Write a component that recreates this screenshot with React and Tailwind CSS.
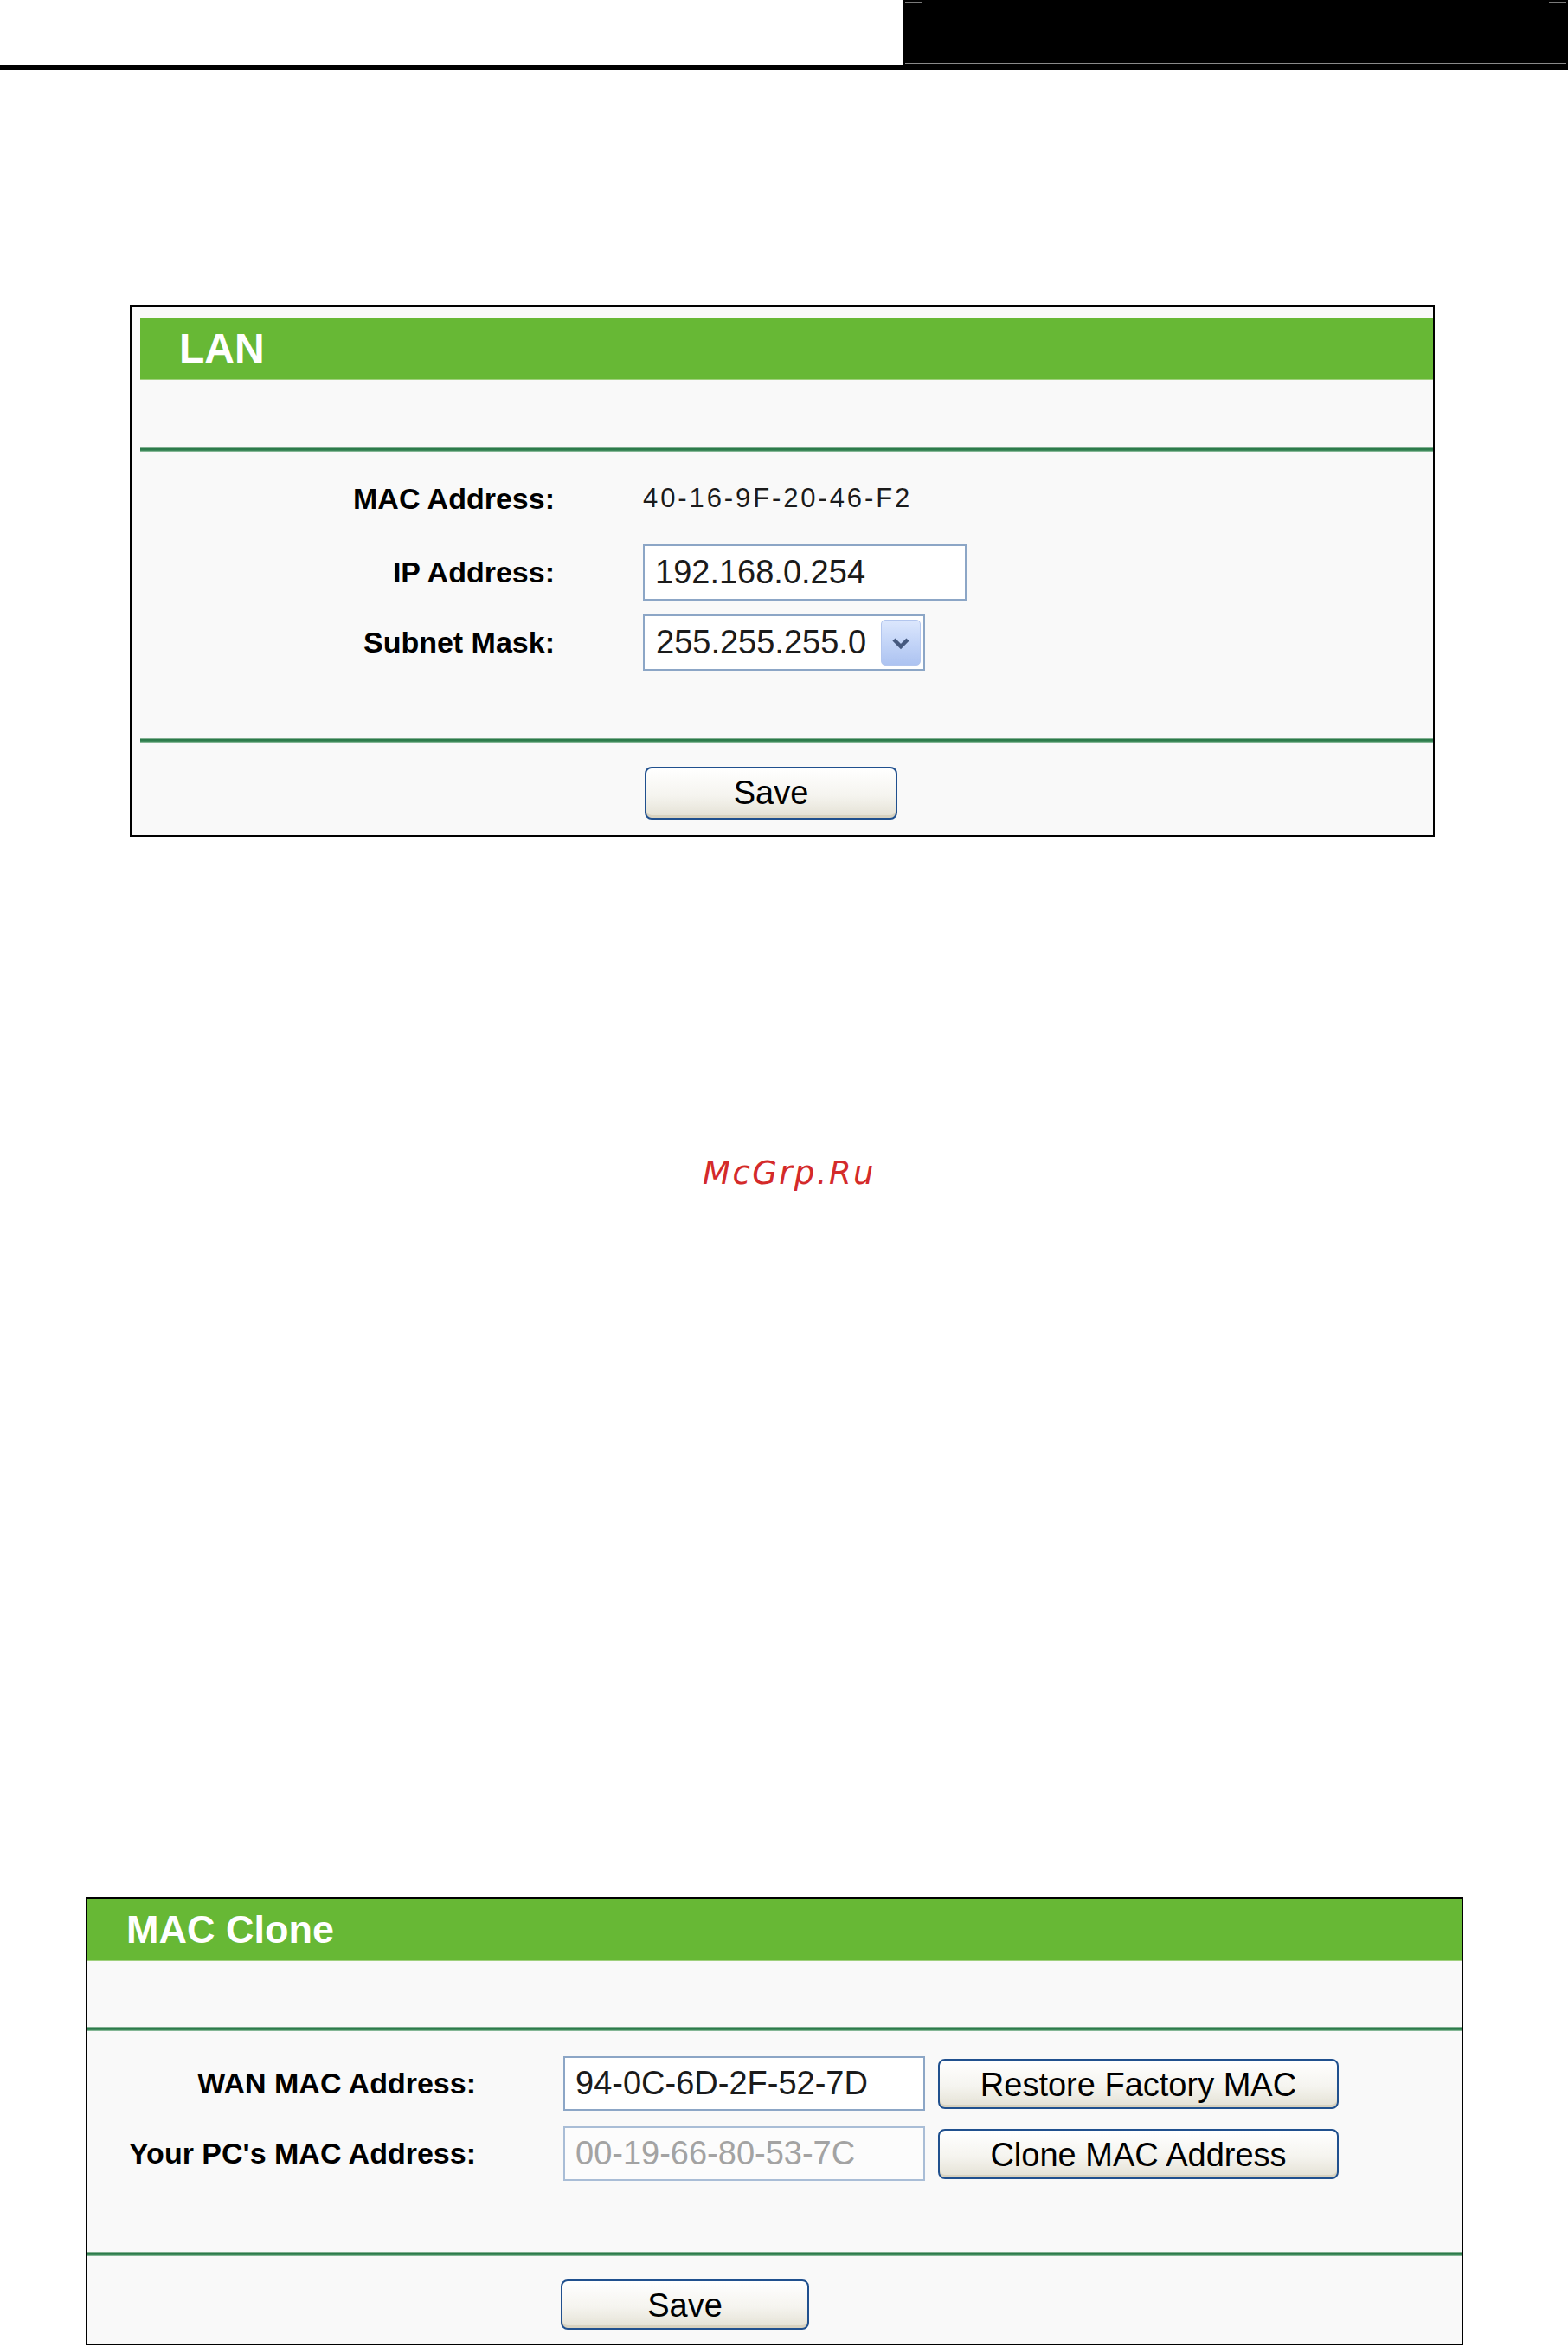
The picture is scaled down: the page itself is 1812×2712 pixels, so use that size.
import React from "react";

// Router admin forms: LAN settings and MAC clone, on a white page
function TopBar() {
  return (
    <div>
      <div className="flex h-[75px]">
        <div className="flex-1" />
        <div className="relative w-[768px] bg-black">
          <div className="absolute left-[2px] top-[2px] h-px w-[20px] bg-[#7a7a7a]" />
          <div className="absolute right-[2px] top-[2px] h-px w-[20px] bg-[#7a7a7a]" />
          <div className="absolute bottom-[1px] left-[2px] right-[2px] h-px bg-[#8a8a8a]" />
        </div>
      </div>
      <div className="h-[6px] bg-black" />
    </div>
  );
}

function Divider() {
  return (
    <div className="h-[5px] bg-[linear-gradient(to_bottom,#b9d3c0_0%,#2c7a4a_25%,#2f7f4e_65%,#a6cdb2_100%)]" />
  );
}

function Header({ title, className }) {
  return (
    <div
      className={`flex items-center border-b border-[#9fd07c] bg-[#67b835] pl-[45px] font-bold text-white ${className}`}
    >
      {title}
    </div>
  );
}

function Field({ value, width, muted }) {
  return (
    <input
      readOnly
      value={value}
      className={`h-full border-2 px-[12px] text-[38px] outline-none ${width} ${
        muted
          ? "border-[#a9bdd6] bg-[#fcfcfc] text-[#a3a3a3]"
          : "border-[#8ca6c6] bg-white text-[#1b1b1b]"
      }`}
    />
  );
}

function Select({ value }) {
  return (
    <div className="flex h-full w-[326px] items-center justify-between border-2 border-[#8ca6c6] bg-white pl-[13px] pr-[3px] text-[38px] text-[#1b1b1b]">
      <span>{value}</span>
      <div className="flex h-[53px] w-[46px] items-center justify-center rounded-[5px] border border-[#b3c6ee] bg-[linear-gradient(to_bottom,#dce7fd,#c1d3f7_55%,#adc3f1)]">
        <svg width="24" height="16" viewBox="0 0 24 16">
          <path d="M4 4l8 8 8-8" fill="none" stroke="#45597f" strokeWidth="4.5" />
        </svg>
      </div>
    </div>
  );
}

function Button({ children, className }) {
  return (
    <button
      className={`rounded-[8px] border-2 border-[#20508e] bg-[linear-gradient(to_bottom,#ffffff,#f5f4ef_55%,#e4e1d4)] text-[38px] text-black shadow-[inset_0_-3px_0_#d8d2bf] ${className}`}
    >
      {children}
    </button>
  );
}

function Label({ children, className }) {
  return (
    <div className={`text-right text-[34px] font-bold text-black ${className}`}>
      {children}
    </div>
  );
}

function LanPanel() {
  return (
    <div className="border-2 border-black bg-[#f9f9f9] pl-[10px] pt-[13px]">
      <Header title="LAN" className="h-[71px] text-[48px]" />
      <div className="h-[78px]" />
      <Divider />
      <div className="pb-[78px] pt-[22px]">
        <div className="flex h-[64px] items-center">
          <Label className="w-[479px]">MAC Address:</Label>
          <div className="ml-[102px] text-[31px] tracking-[2.9px] text-[#1b1b1b]">
            40-16-9F-20-46-F2
          </div>
        </div>
        <div className="mt-[21px] flex h-[65px] items-center">
          <Label className="w-[479px]">IP Address:</Label>
          <div className="ml-[102px] h-full">
            <Field value="192.168.0.254" width="w-[374px]" />
          </div>
        </div>
        <div className="mt-[16px] flex h-[65px] items-center">
          <Label className="w-[479px]">Subnet Mask:</Label>
          <div className="ml-[102px] h-full">
            <Select value="255.255.255.0" />
          </div>
        </div>
      </div>
      <Divider />
      <div className="pb-[18px] pl-[583px] pt-[28px]">
        <Button className="h-[61px] w-[292px]">Save</Button>
      </div>
    </div>
  );
}

function MacClonePanel() {
  return (
    <div className="border-2 border-black bg-[#f9f9f9]">
      <Header title="MAC Clone" className="h-[72px] text-[45px]" />
      <div className="h-[76px]" />
      <Divider />
      <div className="pb-[82px] pt-[29px]">
        <div className="flex h-[63px] items-center">
          <Label className="w-[449px]">WAN MAC Address:</Label>
          <div className="ml-[101px] h-full">
            <Field value="94-0C-6D-2F-52-7D" width="w-[418px]" />
          </div>
          <Button className="ml-[15px] h-[58px] w-[463px]">Restore Factory MAC</Button>
        </div>
        <div className="mt-[18px] flex h-[63px] items-center">
          <Label className="w-[449px]">Your PC's MAC Address:</Label>
          <div className="ml-[101px] h-full">
            <Field value="00-19-66-80-53-7C" width="w-[418px]" muted />
          </div>
          <Button className="ml-[15px] h-[58px] w-[463px]">Clone MAC Address</Button>
        </div>
      </div>
      <Divider />
      <div className="pb-[16px] pl-[547px] pt-[27px]">
        <Button className="h-[58px] w-[287px]">Save</Button>
      </div>
    </div>
  );
}

export default function App() {
  return (
    <div className="min-h-[2712px] bg-white font-['Liberation_Sans',Arial,sans-serif] text-black">
      <TopBar />
      <div className="ml-[150px] mt-[272px] w-[1508px]">
        <LanPanel />
      </div>
      <p className="mt-[367px] pl-[12px] text-center font-['DejaVu_Sans',sans-serif] text-[37px] italic leading-[44px] tracking-[2.4px] text-[#d42a2a]">
        McGrp.Ru
      </p>
      <div className="ml-[99px] mt-[814px] w-[1592px]">
        <MacClonePanel />
      </div>
    </div>
  );
}
